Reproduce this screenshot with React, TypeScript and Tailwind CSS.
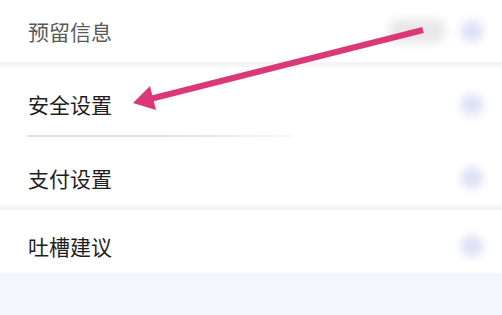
import React from "react";

const font = { fontFamily: '"Noto Sans CJK SC", "Noto Sans", sans-serif' };

function Dot() {
  return <div className="w-[22px] h-[22px] rounded-full bg-[#dde1f5] blur-[4px] mr-[19px]" />;
}

export default function App() {
  return (
    <div className="relative w-[502px] h-[315px] overflow-hidden bg-[#f3f6fc]" style={font}>
      <div className="flex flex-col bg-white">
        <div className="h-[62px] flex items-center justify-between pl-[28px]">
          <span className="text-[21px] leading-none text-[#5a5a5a]">预留信息</span>
          <div className="flex items-center">
            <div className="w-[56px] h-[24px] rounded-[8px] bg-[#e8e8e8] blur-[5px] mr-[16px]" />
            <Dot />
          </div>
        </div>
        <div className="h-[5px] bg-[#f5f5f7]" />
        <div className="h-[68px] flex items-center justify-between pl-[28px] pt-[7px]">
          <span className="text-[21px] leading-none text-[#1e1e1e]">安全设置</span>
          <Dot />
        </div>
        <div className="h-[2px] ml-[27px] w-[265px] bg-gradient-to-r from-[#e0e0e0] via-[#e0e0e0] to-[#f8f8f8]" />
        <div className="h-[68px] flex items-center justify-between pl-[28px] pt-[14px]">
          <span className="text-[21px] leading-none text-[#1e1e1e]">支付设置</span>
          <Dot />
        </div>
        <div className="h-[5px] bg-[#f5f5f7]" />
        <div className="h-[63px] flex items-center justify-between pl-[28px] pt-[9px]">
          <span className="text-[21px] leading-none text-[#1e1e1e]">吐槽建议</span>
          <Dot />
        </div>
      </div>
      <svg className="absolute left-0 top-0" width="502" height="315" viewBox="0 0 502 315">
        <line x1="423" y1="30" x2="150" y2="99" stroke="#da3878" strokeWidth="6" />
        <polygon points="133,103 150,86 156,110" fill="#da3878" />
      </svg>
    </div>
  );
}
